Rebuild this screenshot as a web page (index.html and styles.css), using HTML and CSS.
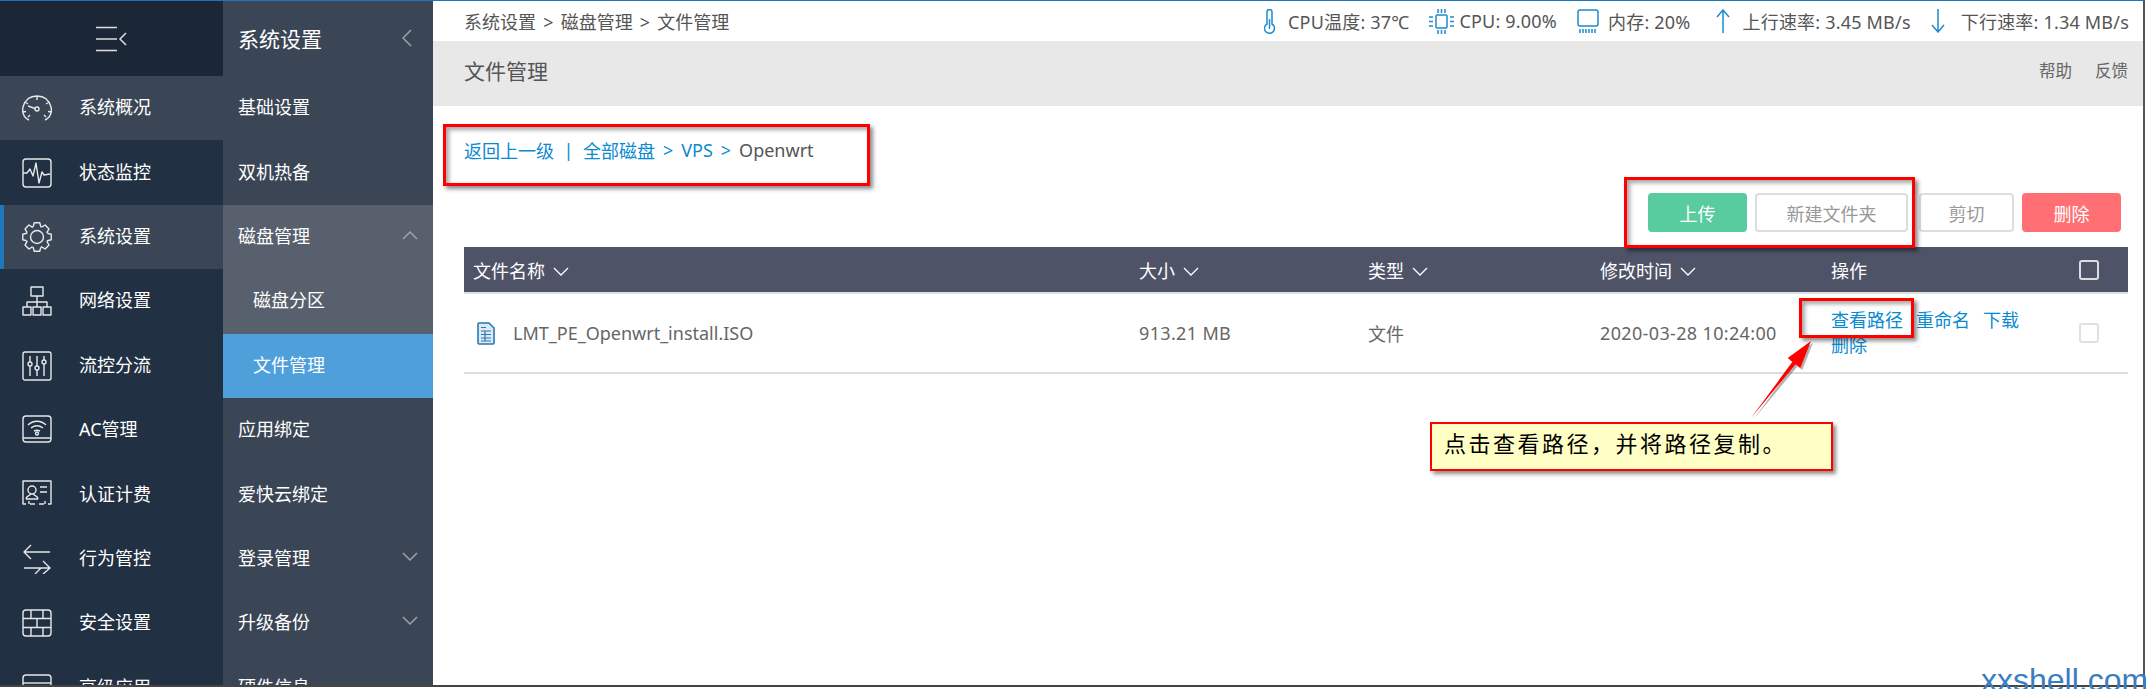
FILE: index.html
```html
<!DOCTYPE html>
<html lang="zh-CN">
<head>
    <meta charset="UTF-8">
    <title>文件管理</title>
    <link rel="stylesheet" href="styles.css">
</head>
<body>
<div class="window">
    <!-- First menu column -->
    <div class="nav-main">
        <div class="nav-toggle">
            <svg width="32" height="26" viewBox="0 0 32 26" class="toggle-icon"><path d="M0 1.500h21M0 13h21M0 24.500h21M30 7l-6 6 6 6"/></svg>
        </div>
        <div class="nav-item hover">
            <svg class="ico" viewBox="0 0 30 30"><path d="M7 27 C1 24 0 19 1 14 C3 7 8 3 15 3 C22 3 27 7 29 14 C30 19 29 24 23 27 M15 3v4M3 9l3 2M27 9l-3 2M1 19l3-.5M29 19l-3-.5M6 24l2-2M24 24l-2-2"/><circle cx="15" cy="16" r="2"/><path d="M13 15.500 6 13"/></svg>
            <span>系统概况</span>
        </div>
        <div class="nav-item">
            <svg class="ico" viewBox="0 0 30 30"><rect x="1" y="1" width="28" height="28" rx="3"/><path d="M1 15h4l3-4 3 7 3-13 3 20 3-11 2 3 6-1"/></svg>
            <span>状态监控</span>
        </div>
        <div class="nav-item hover current">
            <svg class="ico" viewBox="0 0 30 30">
                <defs><path id="tooth" d="M11.240 4.660 12.230.77h5.540l.99 3.890.89.37"/></defs>
                <use href="#tooth"/>
                <use href="#tooth" transform="rotate(45 15 15)"/>
                <use href="#tooth" transform="rotate(90 15 15)"/>
                <use href="#tooth" transform="rotate(135 15 15)"/>
                <use href="#tooth" transform="rotate(180 15 15)"/>
                <use href="#tooth" transform="rotate(225 15 15)"/>
                <use href="#tooth" transform="rotate(270 15 15)"/>
                <use href="#tooth" transform="rotate(315 15 15)"/>
                <circle cx="15" cy="15" r="6.500"/>
            </svg>
            <span>系统设置</span>
        </div>
        <div class="nav-item">
            <svg class="ico" viewBox="0 0 30 30"><rect x="9" y="1" width="12" height="9"/><path d="M15 10v6M5 21v-5h20v5M15 16v5"/><rect x="1" y="21" width="8" height="8"/><rect x="11" y="21" width="8" height="8"/><rect x="21" y="21" width="8" height="8"/></svg>
            <span>网络设置</span>
        </div>
        <div class="nav-item">
            <svg class="ico" viewBox="0 0 30 30"><rect x="1" y="1" width="28" height="28" rx="2"/><path d="M8 5v6M8 15v10M15 5v10M15 19v6M22 5v4M22 13v12"/><circle cx="8" cy="13" r="2"/><circle cx="15" cy="17" r="2"/><circle cx="22" cy="11" r="2"/></svg>
            <span>流控分流</span>
        </div>
        <div class="nav-item">
            <svg class="ico" viewBox="0 0 30 30"><rect x="1" y="1" width="28" height="26" rx="3"/><path d="M1 23h28M6 10c5-5 13-5 18 0M9 13c4-3 8-3 12 0M12 16c2-1 4-1 6 0"/><circle cx="15" cy="18.500" r="1.500"/></svg>
            <span>AC管理</span>
        </div>
        <div class="nav-item">
            <svg class="ico" viewBox="0 0 30 30"><path d="M4 24H1V1h28v23h-3M8 24h5M17 24h5M7 21v3M23 21v3"/><circle cx="10" cy="10" r="4"/><path d="M4 19c0-3 3-3 5-5M16 19c0-3-3-3-5-5M4 19h12M18 7h7M18 12h7"/></svg>
            <span>认证计费</span>
        </div>
        <div class="nav-item">
            <svg class="ico" viewBox="0 0 30 30"><path d="M28 8H3M9 1 2 8l7 7M2 24h26M21 17l7 7-7 6M13 30l6-6"/></svg>
            <span>行为管控</span>
        </div>
        <div class="nav-item">
            <svg class="ico" viewBox="0 0 30 30"><rect x="1" y="2" width="28" height="26" rx="3"/><path d="M1 10.500h28M1 19.500h28M9 2v8.500M21 2v8.500M15 10.500v9M9 19.500V28M21 19.500V28"/></svg>
            <span>安全设置</span>
        </div>
        <div class="nav-item">
            <svg class="ico" viewBox="0 0 30 30"><rect x="1" y="2" width="28" height="26" rx="3"/><path d="M1 10h28"/></svg>
            <span>高级应用</span>
        </div>
    </div>

    <!-- Second menu column -->
    <div class="nav-sub">
        <div class="sub-title">
            <span>系统设置</span>
            <svg class="chev" width="10" height="18" viewBox="0 0 10 18"><path d="M9 1 1 9l8 8"/></svg>
        </div>
        <div class="sub-item">基础设置</div>
        <div class="sub-item">双机热备</div>
        <div class="sub-item open">
            <span>磁盘管理</span>
            <svg class="chev" width="16" height="10" viewBox="0 0 16 10"><path d="M1 9l7-7 7 7"/></svg>
        </div>
        <div class="sub-item open child">磁盘分区</div>
        <div class="sub-item child selected">文件管理</div>
        <div class="sub-item">应用绑定</div>
        <div class="sub-item">爱快云绑定</div>
        <div class="sub-item">
            <span>登录管理</span>
            <svg class="chev" width="16" height="10" viewBox="0 0 16 10"><path d="M1 1l7 7 7-7"/></svg>
        </div>
        <div class="sub-item">
            <span>升级备份</span>
            <svg class="chev" width="16" height="10" viewBox="0 0 16 10"><path d="M1 1l7 7 7-7"/></svg>
        </div>
        <div class="sub-item">硬件信息</div>
    </div>

    <!-- Page content -->
    <div class="content">
        <div class="topbar">
            <div class="crumbs">系统设置 &gt; 磁盘管理 &gt; 文件管理</div>
            <div class="stats">
                <svg class="stat-ico" width="11" height="25" viewBox="0 0 11 25"><path d="M3 15V3a2.500 2.500 0 0 1 5 0v12a5 5 0 1 1-5 0zM5.500 10v10"/></svg>
                <span class="stat gap-a">CPU温度: 37℃</span>
                <svg class="stat-ico" width="25" height="25" viewBox="0 0 25 25"><rect x="7" y="6" width="11" height="13" rx="1"/><path d="M9 0v4M12.500 0v4M16 0v4M9 21v4M12.500 21v4M16 21v4M0 8h4M0 12.500h4M0 17h4M21 8h4M21 12.500h4M21 17h4"/></svg>
                <span class="stat gap-b">CPU: 9.00%</span>
                <svg class="stat-ico" width="22" height="24" viewBox="0 0 22 24"><rect x="1" y="1" width="20" height="16" rx="2"/><path d="M3 20v4M6 20v4M9 20v4M12 20v4M15 20v4M18 20v4"/></svg>
                <span class="stat gap-c">内存: 20%</span>
                <svg class="stat-ico" width="14" height="24" viewBox="0 0 14 24"><path d="M7 24V1M1 8l6-7 6 7"/></svg>
                <span class="stat gap-d">上行速率: 3.45 MB/s</span>
                <svg class="stat-ico" width="14" height="24" viewBox="0 0 14 24"><path d="M7 0v23M1 16l6 7 6-7"/></svg>
                <span class="stat gap-e">下行速率: 1.34 MB/s</span>
            </div>
        </div>

        <div class="title-band">
            <h1>文件管理</h1>
            <div class="title-links"><span>帮助</span><span>反馈</span></div>
        </div>

        <div class="path">
            <a>返回上一级</a><a class="sep">|</a><a>全部磁盘</a><a class="gt">&gt;</a><a>VPS</a><a class="gt">&gt;</a><span>Openwrt</span>
        </div>

        <div class="toolbar">
            <button class="btn green">上传</button>
            <button class="btn wide">新建文件夹</button>
            <button class="btn cut">剪切</button>
            <button class="btn red">删除</button>
        </div>

        <table class="files">
            <thead>
                <tr>
                    <th class="col-name">文件名称<svg class="sort" viewBox="0 0 16 9"><path d="M1 1l7 7 7-7"/></svg></th>
                    <th class="col-size">大小<svg class="sort" viewBox="0 0 16 9"><path d="M1 1l7 7 7-7"/></svg></th>
                    <th class="col-type">类型<svg class="sort" viewBox="0 0 16 9"><path d="M1 1l7 7 7-7"/></svg></th>
                    <th class="col-time">修改时间<svg class="sort" viewBox="0 0 16 9"><path d="M1 1l7 7 7-7"/></svg></th>
                    <th class="col-ops">操作</th>
                    <th class="col-check"><i class="check"></i></th>
                </tr>
            </thead>
            <tbody>
                <tr>
                    <td class="cell-name">
                        <div class="name-wrap">
                            <svg width="18" height="23" viewBox="0 0 18 23"><path class="doc" d="M2 1h10l5 5v15a1 1 0 0 1-1 1H2a1 1 0 0 1-1-1V2a1 1 0 0 1 1-1z"/><path class="doc-lines" d="M4 9h10M4 12.500h10M4 16h10M4 19h10M8 9v10M4 5.500h5"/></svg>
                            <span>LMT_PE_Openwrt_install.ISO</span>
                        </div>
                    </td>
                    <td class="num">913.21 MB</td>
                    <td>文件</td>
                    <td class="num">2020-03-28 10:24:00</td>
                    <td class="ops"><a>查看路径</a><a>重命名</a><a>下载</a><a>删除</a></td>
                    <td class="col-check"><i class="check light"></i></td>
                </tr>
            </tbody>
        </table>
    </div>

    <!-- Annotations drawn over the screenshot -->
    <div class="mark mark-path"></div>
    <div class="mark mark-tools"></div>
    <div class="mark mark-cell"></div>
    <svg class="arrow" width="70" height="84" viewBox="0 0 70 84">
        <path class="arrow-shadow" d="M4 82 45.400 25.800 40.700 22.100 64 5 53.300 31.900 48.600 28.200z"/>
        <path class="arrow-red" d="M2 80 43.400 23.800 38.700 20.100 62 3 51.300 29.900 46.600 26.200z"/>
    </svg>
    <div class="callout">点击查看路径，并将路径复制。</div>
</div>
<div class="watermark">xxshell.com</div>
</body>
</html>
```

FILE: styles.css
```css
* {
    box-sizing: border-box;
    margin: 0;
    padding: 0;
}

body {
    width: 2146px;
    height: 689px;
    overflow: hidden;
    position: relative;
    background: #fff;
    font-family: "Noto Sans", "Noto Sans CJK SC", sans-serif;
    font-size: 18px;
    color: #555;
}

.window {
    position: relative;
    display: flex;
    width: 2145px;
    height: 687px;
    overflow: hidden;
    border-top: 1px solid #1c75b9;
    border-right: 2px solid #555;
    border-bottom: 2px solid #444;
}

/* First menu column */
.nav-main {
    flex: 0 0 223px;
    background: #213042;
    color: #fff;
}

.nav-toggle {
    display: flex;
    align-items: center;
    justify-content: center;
    height: 75px;
    background: #1b2737;
}

.toggle-icon {
    fill: none;
    stroke: #ddd;
    stroke-width: 1.5;
}

.nav-item {
    display: flex;
    align-items: center;
    height: 64.4px;
    padding-left: 22px;
}

.nav-item span {
    margin-left: 27px;
    padding-bottom: 4px;
}

.hover {
    background: #3a4656;
}

.current {
    border-left: 4px solid #1f78bd;
    padding-left: 18px;
}

.ico {
    flex: 0 0 30px;
    width: 30px;
    height: 30px;
    fill: none;
    stroke: #e6e8ea;
    stroke-width: 1.4;
    stroke-linejoin: round;
}

/* Second menu column */
.nav-sub {
    flex: 0 0 210px;
    background: #3a4555;
    color: #fff;
}

.sub-title {
    display: flex;
    align-items: center;
    justify-content: space-between;
    height: 75px;
    padding: 0 21px 2px 15px;
    font-size: 21px;
}

.sub-item {
    display: flex;
    align-items: center;
    justify-content: space-between;
    height: 64.4px;
    padding: 0 15px 4px;
}

.chev {
    fill: none;
    stroke: #9ca3ad;
    stroke-width: 1.5;
}

.open {
    background: #585f6d;
}

.child {
    padding-left: 30px;
}

.selected {
    background: #4f9fdb;
}

/* Page content */
.content {
    flex: 1;
    min-width: 0;
}

.topbar {
    display: flex;
    align-items: center;
    justify-content: space-between;
    height: 40px;
    padding: 0 14px 0 31px;
    font-size: 18px;
}

.crumbs {
    word-spacing: 2.5px;
}

.stats {
    display: flex;
    align-items: center;
}

.stat-ico {
    fill: none;
    stroke: #1c8ccd;
    stroke-width: 1.5;
}

.stat {
    letter-spacing: 0.2px;
}

.gap-a {
    margin-left: 13px;
    margin-right: 20px;
}

.gap-b {
    margin-left: 5px;
    margin-right: 20px;
}

.gap-c {
    margin-left: 9px;
    margin-right: 25px;
}

.gap-d {
    margin-left: 13px;
    margin-right: 20px;
}

.gap-e {
    margin-left: 16px;
}

.title-band {
    display: flex;
    align-items: center;
    justify-content: space-between;
    height: 65px;
    padding: 0 15px 7px 31px;
    background: #e8e8e8;
}

.title-band h1 {
    font-size: 21px;
    font-weight: normal;
    color: #555;
}

.title-links {
    display: flex;
    gap: 23px;
    font-size: 16.5px;
    color: #666;
}

.path {
    display: flex;
    align-items: center;
    height: 26px;
    margin-top: 31px;
    padding-left: 31px;
}

.path a {
    color: #0a8ad0;
}

.path .sep {
    margin: 0 9.5px;
}

.path .gt {
    margin: 0 8px;
}

.toolbar {
    display: flex;
    justify-content: flex-end;
    gap: 8px;
    margin-top: 30px;
    padding-right: 22px;
}

.btn {
    width: 99px;
    height: 39px;
    border: 2px solid #ddd;
    border-radius: 4px;
    background: #fff;
    color: #999;
    font-family: inherit;
    font-size: 18px;
}

.btn.wide {
    width: 153px;
    margin-right: 3px;
}

.btn.cut {
    width: 95px;
}

.green {
    background: #58cc9f;
    border-color: #58cc9f;
    color: #fff;
}

.red {
    background: #ff6f73;
    border-color: #ff6f73;
    color: #fff;
}

.files {
    width: 1664px;
    margin: 15px 0 0 31px;
    border-collapse: collapse;
    table-layout: fixed;
}

.files th {
    height: 46px;
    padding-left: 9px;
    background: #4e5367;
    border-bottom: 2px solid #e0e0e0;
    color: #fff;
    font-weight: normal;
    text-align: left;
}

.sort {
    width: 16px;
    height: 9px;
    margin-left: 8px;
    fill: none;
    stroke: #fff;
    stroke-width: 1.3;
    vertical-align: 2px;
}

.files td {
    height: 80px;
    padding-left: 9px;
    border-bottom: 2px solid #ddd;
    color: #666;
}

.col-name { width: 666px; }
.col-size { width: 229px; }
.col-type { width: 232px; }
.col-time { width: 231px; }
.col-ops { width: 230px; }
.col-check { width: 76px; }

.files .col-check {
    padding-left: 27px;
}

.files .num {
    letter-spacing: 0.35px;
}

.name-wrap {
    display: flex;
    align-items: center;
    gap: 18px;
    padding-left: 4px;
}

.doc {
    fill: #dceaf5;
    stroke: #2a78b4;
    stroke-width: 1.6;
}

.doc-lines {
    fill: none;
    stroke: #2a78b4;
    stroke-width: 1.2;
}

.files .ops {
    line-height: 25px;
}

.ops a {
    display: inline-block;
    margin-right: 13px;
    color: #0a8ad0;
}

.check {
    display: block;
    width: 20px;
    height: 20px;
    border: 2px solid #ddd;
    border-radius: 3px;
}

.check.light {
    border-color: #e0e0e0;
}

/* Annotations */
.mark {
    position: absolute;
    border: 3px solid #f00;
    box-shadow: 3px 3px 4px rgba(0, 0, 0, 0.45), inset 3px 3px 4px rgba(0, 0, 0, 0.35);
}

.mark-path {
    left: 443px;
    top: 123px;
    width: 427px;
    height: 62px;
}

.mark-tools {
    left: 1624px;
    top: 176px;
    width: 291px;
    height: 71px;
}

.mark-cell {
    left: 1799px;
    top: 297px;
    width: 115px;
    height: 40px;
}

.arrow {
    position: absolute;
    left: 1749px;
    top: 337px;
}

.arrow-shadow {
    fill: rgba(0, 0, 0, 0.3);
}

.arrow-red {
    fill: #f00;
}

.callout {
    position: absolute;
    left: 1430px;
    top: 421px;
    width: 403px;
    height: 49px;
    padding-left: 12px;
    border: 2px solid #f00;
    background: #ffffc5;
    box-shadow: 3px 3px 4px rgba(0, 0, 0, 0.45);
    color: #000;
    font-size: 22px;
    letter-spacing: 2.5px;
    line-height: 38px;
}

.watermark {
    position: absolute;
    left: 1981px;
    top: 662px;
    color: #3a7ebf;
    font-family: "Liberation Sans", sans-serif;
    font-size: 32px;
    line-height: 37px;
}
```
